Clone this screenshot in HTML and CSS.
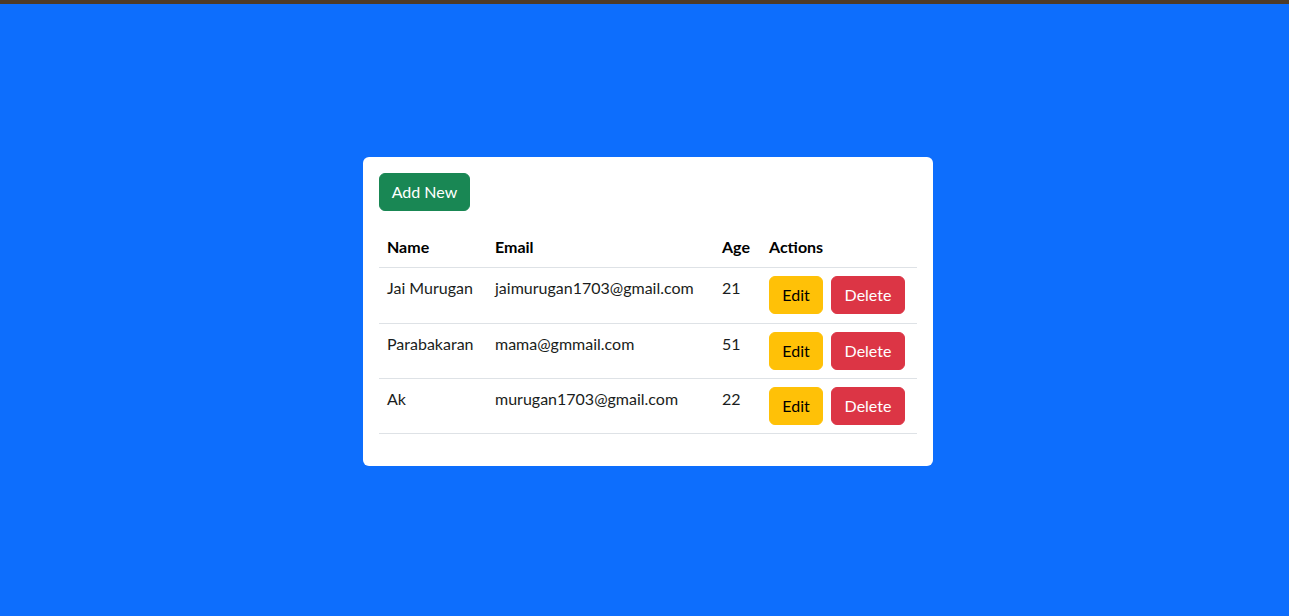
FILE: index.html
```html
<!DOCTYPE html>
<html lang="en">
<head>
<meta charset="utf-8">
<title>Users</title>
<link rel="stylesheet" href="styles.css">
</head>
<body>
<div class="topbar"></div>
<main class="page">
  <section class="card">
    <button class="btn btn-success">Add New</button>
    <table class="table">
      <colgroup>
        <col class="c-name"><col class="c-email"><col class="c-age"><col class="c-actions">
      </colgroup>
      <thead>
        <tr><th>Name</th><th>Email</th><th>Age</th><th>Actions</th></tr>
      </thead>
      <tbody>
        <tr class="first">
          <td>Jai Murugan</td><td>jaimurugan1703@gmail.com</td><td>21</td>
          <td><div class="actions"><button class="btn btn-warning">Edit</button><button class="btn btn-danger">Delete</button></div></td>
        </tr>
        <tr>
          <td>Parabakaran</td><td>mama@gmmail.com</td><td>51</td>
          <td><div class="actions"><button class="btn btn-warning">Edit</button><button class="btn btn-danger">Delete</button></div></td>
        </tr>
        <tr>
          <td>Ak</td><td>murugan1703@gmail.com</td><td>22</td>
          <td><div class="actions"><button class="btn btn-warning">Edit</button><button class="btn btn-danger">Delete</button></div></td>
        </tr>
      </tbody>
    </table>
  </section>
</main>
</body>
</html>
```
FILE: styles.css
```css
* { box-sizing: border-box; }
html, body { margin: 0; height: 100%; }
body {
  background: #0d6efd;
  font-family: Lato, "Open Sans", sans-serif;
  font-size: 16px;
  line-height: 1.5;
  color: #1a1d20;
  display: flex;
  flex-direction: column;
}
.topbar { height: 4px; background: #4d3b29; flex: none; }
.page {
  flex: 1;
  display: flex;
  align-items: center;
  justify-content: center;
  padding-top: 3px;
}
.card {
  width: 570px;
  background: #fff;
  border-radius: 6px;
  padding: 16px;
  margin-left: 7px;
}
.btn {
  font-family: inherit;
  font-size: 16px;
  line-height: 24px;
  padding: 6px 0;
  border: 1px solid transparent;
  border-radius: 6px;
  white-space: nowrap;
  text-align: center;
  cursor: pointer;
}
.btn-success { background: #198754; border-color: #198754; color: #fff; width: 91px; }
.btn-warning { background: #ffc107; border-color: #ffc107; color: #000; width: 54px; }
.btn-danger { background: #dc3545; border-color: #dc3545; color: #fff; width: 74px; }
.table {
  width: 538px;
  margin-top: 16px;
  margin-bottom: 16px;
  border-collapse: collapse;
  table-layout: fixed;
}
.c-name { width: 108px; }
.c-email { width: 227px; }
.c-age { width: 47px; }
.c-actions { width: 156px; }
.table th, .table td {
  padding: 8px;
  text-align: left;
  vertical-align: top;
  border-bottom: 1px solid #dee2e6;
  white-space: nowrap;
}
.table tr.first td { padding-bottom: 9px; }
.table th { font-weight: 700; color: #000; }
.actions { display: flex; gap: 8px; }
```
